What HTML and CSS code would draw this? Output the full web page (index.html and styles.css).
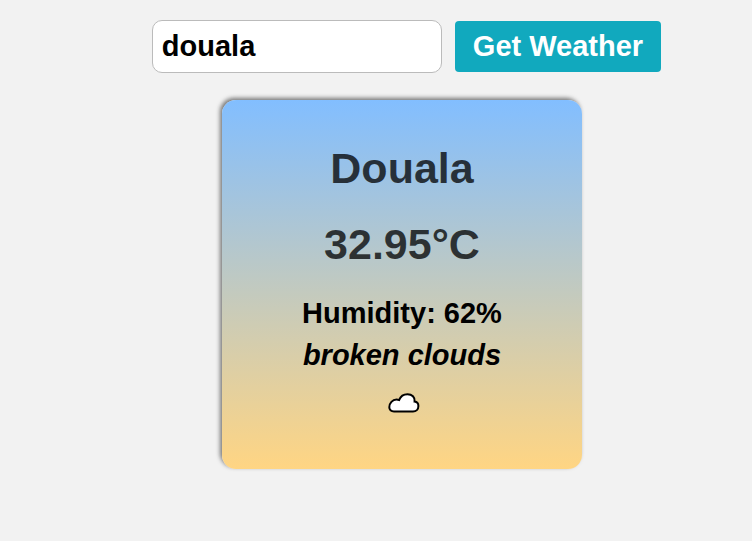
FILE: index.html
```html
<!DOCTYPE html>
<html lang="en">
<head>
<meta charset="utf-8">
<meta name="viewport" content="width=device-width, initial-scale=1">
<title>Weather</title>
<link rel="stylesheet" href="styles.css">
</head>
<body>
<form class="search">
  <input class="city-input" type="text" aria-label="City" value="douala">
  <button class="search-button" type="submit">Get Weather</button>
</form>
<main class="card">
  <h1 class="city">Douala</h1>
  <p class="temp">32.95°C</p>
  <p class="humidity">Humidity: 62%</p>
  <p class="description">broken clouds</p>
  <svg class="icon" viewBox="0 0 32 20" role="img" aria-label="Cloudy">
    <path d="M6 18.500C3 18.500 1.300 16.700 1.300 14.200C1.300 10 4.500 6.600 8.500 6.600C9.600 6.600 10.400 6.700 11.200 7C12.500 3.400 15.800 1.200 19.500 1.200C24 1.200 27.200 4.200 26.600 8.600C29.200 9 30.400 10.900 30.400 13C30.400 16.300 28 18.500 25 18.500Z"/>
  </svg>
</main>
</body>
</html>
```
FILE: styles.css
```css
* {
  box-sizing: border-box;
}

body {
  margin: 0;
  padding: 20px;
  background: #f2f2f2;
  color: #000;
  font-family: Arial, "Liberation Sans", sans-serif;
  font-weight: bold;
  display: flex;
  flex-direction: column;
  align-items: center;
  gap: 27px;
}

.search {
  display: flex;
  align-items: center;
  gap: 13px;
  margin-left: 61px;
}

.search-button,
.city-input {
  font: inherit;
  font-size: 29px;
  line-height: 33px;
}

.city-input {
  width: 290px;
  padding: 9px;
  border: 1px solid #bbb;
  border-radius: 10px;
  background: #fff;
  color: #000;
}

.search-button {
  padding: 9px 18px;
  border: 0;
  border-radius: 4px;
  background: #11a9be;
  color: #fff;
}

.card {
  display: flex;
  flex-direction: column;
  align-items: center;
  width: 360px;
  margin-left: 52px;
  padding: 43px 20px 56px;
  border-radius: 14px;
  background: linear-gradient(#82beff, #ffd583);
  box-shadow: -2px -2px 4px #777;
}

.city,
.temp {
  margin: 0 0 26px;
  font-size: 43px;
  line-height: 50px;
  color: rgba(0, 0, 0, 0.75);
}

.temp {
  margin-bottom: 28px;
}

.humidity,
.description {
  margin: 0 0 9px;
  font-size: 29px;
  line-height: 33px;
}

.description {
  font-style: italic;
}

.icon {
  width: 32px;
  height: 20px;
  margin: 12px 0 0 3px;
  fill: #fff;
  stroke: #000;
  stroke-width: 2;
}
```
